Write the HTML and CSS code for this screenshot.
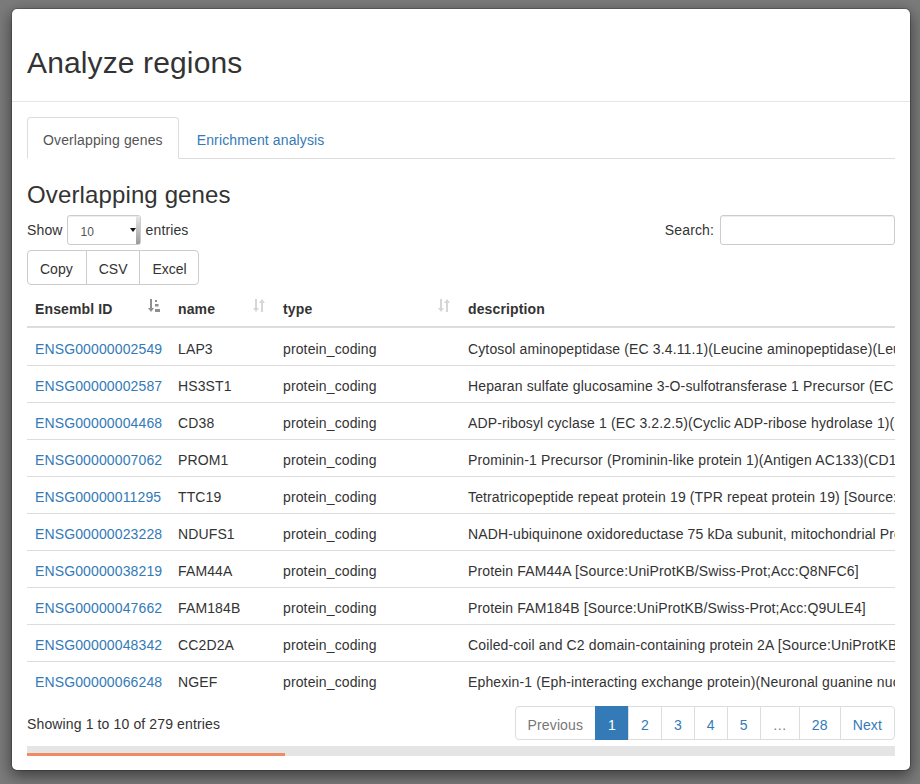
FILE: index.html
```html
<!DOCTYPE html>
<html lang="en">
<head>
<meta charset="utf-8">
<title>Analyze regions</title>
<link rel="stylesheet" href="styles.css">
</head>
<body>
<div class="modal">
  <div class="modal-header">
    <h2 class="modal-title">Analyze regions</h2>
  </div>
  <div class="modal-body">
    <ul class="tabs">
      <li class="tab active"><a>Overlapping genes</a></li>
      <li class="tab"><a>Enrichment analysis</a></li>
    </ul>
    <div class="pane">
      <h3 class="pane-title">Overlapping genes</h3>
      <div class="controls">
        <label class="length">Show <span class="select-wrap"><select class="select"><option>10</option><option>25</option><option>50</option><option>100</option></select></span> entries</label>
        <label class="filter">Search:<input class="search" type="search"></label>
      </div>
      <div class="btn-group">
        <button class="btn">Copy</button><button class="btn">CSV</button><button class="btn">Excel</button>
      </div>
      <div class="scroll">
        <table class="grid">
          <colgroup>
            <col class="c1"><col class="c2"><col class="c3"><col class="c4">
          </colgroup>
          <thead>
            <tr>
              <th>Ensembl ID<svg class="sort asc" viewBox="0 0 12 13" width="12" height="13"><path d="M2 0h2v9h2l-3 4-3-4h2z"/><rect x="7" y="1" width="2" height="2"/><rect x="7" y="5" width="3.5" height="2.5"/><rect x="7" y="10" width="5" height="3"/></svg></th>
              <th>name<svg class="sort both" viewBox="0 0 12 13" width="12" height="13"><path d="M2 0h2v9h2l-3 4-3-4h2z"/><path d="M8 13h2V4h2L9 0 6 4h2z"/></svg></th>
              <th>type<svg class="sort both" viewBox="0 0 12 13" width="12" height="13"><path d="M2 0h2v9h2l-3 4-3-4h2z"/><path d="M8 13h2V4h2L9 0 6 4h2z"/></svg></th>
              <th>description</th>
            </tr>
          </thead>
          <tbody>
            <tr><td><a class="link">ENSG00000002549</a></td><td>LAP3</td><td>protein_coding</td><td>Cytosol aminopeptidase (EC 3.4.11.1)(Leucine aminopeptidase)(Leucyl aminopeptidase)(LAP)(Peptidase S)(Proline aminopeptidase)(EC 3.4.11.5)(Prolyl aminopeptidase) [Source:UniProtKB/Swiss-Prot;Acc:P28838]</td></tr>
            <tr><td><a class="link">ENSG00000002587</a></td><td>HS3ST1</td><td>protein_coding</td><td>Heparan sulfate glucosamine 3-O-sulfotransferase 1 Precursor (EC 2.8.2.23)(Heparan sulfate D-glucosaminyl 3-O-sulfotransferase 1)(3-OST-1)(h3-OST-1) [Source:UniProtKB/Swiss-Prot;Acc:O14792]</td></tr>
            <tr><td><a class="link">ENSG00000004468</a></td><td>CD38</td><td>protein_coding</td><td>ADP-ribosyl cyclase 1 (EC 3.2.2.5)(Cyclic ADP-ribose hydrolase 1)(cADPr hydrolase 1)(Lymphocyte differentiation antigen CD38)(T10)(Acute lymphoblastic leukemia cells antigen CD38)(CD38 antigen) [Source:UniProtKB/Swiss-Prot;Acc:P28907]</td></tr>
            <tr><td><a class="link">ENSG00000007062</a></td><td>PROM1</td><td>protein_coding</td><td>Prominin-1 Precursor (Prominin-like protein 1)(Antigen AC133)(CD133 antigen) [Source:UniProtKB/Swiss-Prot;Acc:O43490]</td></tr>
            <tr><td><a class="link">ENSG00000011295</a></td><td>TTC19</td><td>protein_coding</td><td>Tetratricopeptide repeat protein 19 (TPR repeat protein 19) [Source:UniProtKB/Swiss-Prot;Acc:Q6DKK2]</td></tr>
            <tr><td><a class="link">ENSG00000023228</a></td><td>NDUFS1</td><td>protein_coding</td><td>NADH-ubiquinone oxidoreductase 75 kDa subunit, mitochondrial Precursor (EC 1.6.5.3)(EC 1.6.99.3)(Complex I-75kD)(CI-75kD) [Source:UniProtKB/Swiss-Prot;Acc:P28331]</td></tr>
            <tr><td><a class="link">ENSG00000038219</a></td><td>FAM44A</td><td>protein_coding</td><td>Protein FAM44A [Source:UniProtKB/Swiss-Prot;Acc:Q8NFC6]</td></tr>
            <tr><td><a class="link">ENSG00000047662</a></td><td>FAM184B</td><td>protein_coding</td><td>Protein FAM184B [Source:UniProtKB/Swiss-Prot;Acc:Q9ULE4]</td></tr>
            <tr><td><a class="link">ENSG00000048342</a></td><td>CC2D2A</td><td>protein_coding</td><td>Coiled-coil and C2 domain-containing protein 2A [Source:UniProtKB/Swiss-Prot;Acc:Q9P2K1]</td></tr>
            <tr><td><a class="link">ENSG00000066248</a></td><td>NGEF</td><td>protein_coding</td><td>Ephexin-1 (Eph-interacting exchange protein)(Neuronal guanine nucleotide exchange factor) [Source:UniProtKB/Swiss-Prot;Acc:Q8N5V2]</td></tr>
          </tbody>
        </table>
      </div>
      <div class="footer-row">
        <div class="info">Showing 1 to 10 of 279 entries</div>
        <ul class="pagination">
          <li class="page disabled">Previous</li>
          <li class="page active">1</li>
          <li class="page">2</li>
          <li class="page">3</li>
          <li class="page">4</li>
          <li class="page">5</li>
          <li class="page disabled">…</li>
          <li class="page">28</li>
          <li class="page">Next</li>
        </ul>
      </div>
      <div class="hscroll"><div class="thumb"></div></div>
    </div>
  </div>
</div>
</body>
</html>
```
FILE: styles.css
```css
* { box-sizing: border-box; }
html, body {
  margin: 0;
  height: 784px;
  overflow: hidden;
}
body {
  background: #7b7b7b;
  font-family: "Liberation Sans", Arial, sans-serif;
  font-size: 14px;
  line-height: 20px;
  letter-spacing: 0.13px;
  color: #333;
  padding-top: 8px;
}
.modal {
  width: 900px;
  margin-left: 11px;
  background: #fff;
  background-clip: padding-box;
  border: 1px solid rgba(0, 0, 0, .2);
  border-radius: 6px;
  box-shadow: 0 5px 15px rgba(0, 0, 0, .5);
}
.modal-header {
  padding: 15px;
  border-bottom: 1px solid #e5e5e5;
}
.modal-title {
  margin: 22px 0 7px;
  font-size: 30px;
  line-height: 33px;
  font-weight: 500;
}
.modal-body {
  padding: 15px 15px 14px;
}
.tabs {
  list-style: none;
  margin: 0;
  padding: 0;
  display: flex;
  border-bottom: 1px solid #ddd;
}
.tab { margin-bottom: -1px; }
.tab a {
  display: block;
  padding: 12px 15px 8px;
  margin-right: 2px;
  border: 1px solid transparent;
  border-radius: 4px 4px 0 0;
  color: #337ab7;
}
.tab.active a {
  color: #555;
  background: #fff;
  border-color: #ddd #ddd transparent;
}
.pane-title {
  margin: 23px 0 7px;
  font-size: 24px;
  line-height: 26.4px;
  font-weight: 500;
}
.controls {
  display: flex;
  justify-content: space-between;
  align-items: center;
  height: 30px;
}
.length, .filter {
  display: flex;
  align-items: center;
  font-weight: normal;
  padding-bottom: 1px;
}
.select-wrap {
  position: relative;
  display: inline-block;
  margin: 0 5px 0 4px;
}
.select {
  -webkit-appearance: none;
  appearance: none;
  width: 74px;
  height: 30px;
  padding: 6px 10px 2px 13px;
  font-family: inherit;
  font-size: 12px;
  line-height: 18px;
  color: #555;
  background: #fff;
  border: 1px solid #ccc;
  border-radius: 3px;
  box-shadow: inset 0 1px 1px rgba(0, 0, 0, .075);
  display: block;
}
.select-wrap::before {
  content: "";
  position: absolute;
  right: 5px;
  top: 13px;
  border-left: 3px solid transparent;
  border-right: 3px solid transparent;
  border-top: 4px solid #111;
}
.select-wrap::after {
  content: "";
  position: absolute;
  right: 1px;
  top: 1px;
  bottom: 1px;
  width: 4px;
  background: linear-gradient(to bottom, #e8e8e8, #9a9a9a);
}
.search {
  margin-left: 6px;
  width: 175px;
  height: 30px;
  padding: 5px 10px;
  font-family: inherit;
  font-size: 12px;
  border: 1px solid #ccc;
  border-radius: 3px;
  box-shadow: inset 0 1px 1px rgba(0, 0, 0, .075);
}
.btn-group {
  display: flex;
  margin-top: 5px;
}
.btn {
  font-family: inherit;
  font-size: 14px;
  letter-spacing: 0;
  line-height: 20px;
  padding: 8px 12px 5px;
  color: #333;
  background: #fff;
  border: 1px solid #ccc;
  margin: 0 0 0 -1px;
  border-radius: 0;
}
.btn:first-child { margin-left: 0; border-radius: 4px 0 0 4px; padding-right: 13px; }
.btn:last-child { border-radius: 0 4px 4px 0; padding-right: 11px; }
.scroll {
  margin-top: 5px;
  width: 868px;
  overflow: hidden;
}
.grid {
  table-layout: fixed;
  width: 2920px;
  border-collapse: separate;
  border-spacing: 0;
  white-space: nowrap;
}
.c1 { width: 143px; }
.c2 { width: 105px; }
.c3 { width: 185px; }
.grid th {
  position: relative;
  text-align: left;
  font-weight: bold;
  padding: 9px 30px 7px 8px;
  border-bottom: 2px solid #ddd;
}
.grid td {
  padding: 10px 8px 6px;
  border-top: 1px solid #ddd;
  overflow: hidden;
}
.grid tbody tr:first-child td {
  border-top: 0;
  padding-top: 11px;
}
.sort {
  position: absolute;
  right: 10px;
  top: 9px;
}
.sort.asc { fill: #8f8f8f; }
.sort.both { fill: #d6d6d6; }
.link { color: #337ab7; }
.footer-row {
  display: flex;
  justify-content: space-between;
  margin-top: 6px;
}
.info { padding-top: 10px; }
.pagination {
  display: flex;
  list-style: none;
  margin: 2px 0;
  padding: 0;
}
.page {
  padding: 8px 12px 4px;
  line-height: 20px;
  border: 1px solid #ddd;
  margin-left: -1px;
  color: #337ab7;
  background: #fff;
}
.page:first-child { margin-left: 0; border-radius: 4px 0 0 4px; }
.page:last-child { border-radius: 0 4px 4px 0; }
.page.disabled { color: #777; }
.page.active {
  color: #fff;
  background: #337ab7;
  border-color: #337ab7;
}
.hscroll {
  margin-top: 4px;
  height: 10px;
  background: #e5e5e5;
  display: flex;
  align-items: flex-end;
}
.thumb {
  width: 258px;
  height: 3px;
  background: #ec8b64;
}
```
